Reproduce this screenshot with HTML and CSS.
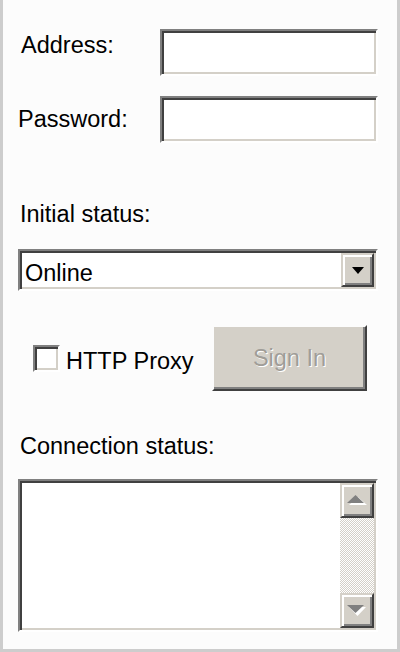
FILE: index.html
```html
<!DOCTYPE html>
<html>
<head>
<meta charset="utf-8">
<link rel="stylesheet" href="styles.css">
</head>
<body>
<div class="frame">
  <div class="field-row r1">
    <span class="lbl">Address:</span>
    <div class="field sunken"></div>
  </div>
  <div class="field-row r2">
    <span class="lbl">Password:</span>
    <div class="field sunken"></div>
  </div>
  <div class="section-lbl status-lbl">Initial status:</div>
  <div class="select sunken">
    <span class="val">Online</span>
    <span class="dd raised">
      <svg width="12" height="7" viewBox="0 0 12 7"><polygon points="0,0 12,0 6,7" fill="#000"/></svg>
    </span>
  </div>
  <div class="actions">
    <label class="check"><span class="box sunken"></span><span class="check-text">HTTP Proxy</span></label>
    <button class="btn raised" disabled>Sign In</button>
  </div>
  <div class="section-lbl conn-lbl">Connection status:</div>
  <div class="textarea sunken">
    <div class="content"></div>
    <div class="scrollbar">
      <div class="sb-btn raised">
        <svg width="20" height="11" viewBox="0 0 20 11"><polygon points="2,10 20,10 11,2" fill="#fff"/><polygon points="0,8 17,8 8.5,0" fill="#808080"/></svg>
      </div>
      <div class="track"></div>
      <div class="sb-btn raised">
        <svg width="20" height="11" viewBox="0 0 20 11"><polygon points="2,2 19,2 10.5,11" fill="#fff"/><polygon points="0,0 17,0 8.5,8" fill="#808080"/></svg>
      </div>
    </div>
  </div>
</div>
</body>
</html>
```

FILE: styles.css
```css
* {
  box-sizing: border-box;
  margin: 0;
  padding: 0;
}

html, body {
  width: 400px;
  height: 652px;
  overflow: hidden;
  background: #fcfcfc;
}

body {
  font-family: "Liberation Sans", Arial, sans-serif;
  font-size: 23.5px;
  color: #000;
}

.frame {
  width: 400px;
  height: 652px;
  border: 3px solid #cdcdcd;
  border-top: 0;
  padding: 29px 19px 0 15px;
  display: flex;
  flex-direction: column;
}

.sunken {
  background: #fff;
  border-style: solid;
  border-width: 2px;
  border-color: #808080 #fff #fff #808080;
  box-shadow: inset 2px 2px #404040, inset -2px -2px #d4d0c8;
}

.raised {
  background: #d4d0c8;
  border-style: solid;
  border-width: 2px;
  border-color: #d4d0c8 #404040 #404040 #d4d0c8;
  box-shadow: inset 2px 2px #fff, inset -2px -2px #808080;
}

.field-row {
  display: flex;
  height: 47px;
}

.field-row .lbl {
  width: 142px;
  line-height: 27px;
  padding-left: 3px;
}

.r1 .lbl {
  margin-top: 3px;
}

.r2 {
  margin-top: 20px;
}

.r2 .lbl {
  margin-top: 10px;
  padding-left: 0;
}

.field {
  flex: 0 0 218px;
  height: 47px;
}

.section-lbl {
  line-height: 27px;
  padding-left: 2px;
}

.status-lbl {
  margin-top: 58px;
}

.select {
  margin-top: 21px;
  height: 42px;
  display: flex;
  padding: 2px;
}

.select .val {
  flex: 1;
  padding: 6px 0 0 3px;
  line-height: 28px;
}

.select .dd {
  width: 33px;
  display: flex;
  align-items: center;
  justify-content: center;
  box-shadow: none;
  border-color: #d4d0c8 #404040 #404040 #d4d0c8;
  box-shadow: inset 2px 2px #fff, inset -2px -2px #808080;
}

.actions {
  margin-top: 34px;
  height: 66px;
  display: flex;
  align-items: center;
}

.check {
  display: flex;
  align-items: center;
  margin-left: 15px;
}

.box {
  width: 27px;
  height: 27px;
}

.check-text {
  margin-left: 6px;
  padding-top: 6px;
  line-height: 27px;
}

.btn {
  margin-left: auto;
  margin-right: 11px;
  width: 155px;
  height: 66px;
  font: inherit;
  color: #a09d98;
  text-shadow: 1px 1px 0 #fff;
  border-color: #fcfcfc #404040 #404040 #fcfcfc;
  box-shadow: inset -2px -2px #808080;
}

.conn-lbl {
  margin-top: 42px;
}

.textarea {
  margin-top: 19px;
  height: 153px;
  display: flex;
  padding: 2px;
}

.textarea .content {
  flex: 1;
}

.scrollbar {
  width: 34px;
  display: flex;
  flex-direction: column;
}

.sb-btn {
  height: 35px;
  display: flex;
  align-items: center;
  justify-content: center;
}

.track {
  flex: 1;
  background: repeating-conic-gradient(#d4d0c8 0 25%, #fff 0 50%) 0 0 / 2px 2px;
}
```
